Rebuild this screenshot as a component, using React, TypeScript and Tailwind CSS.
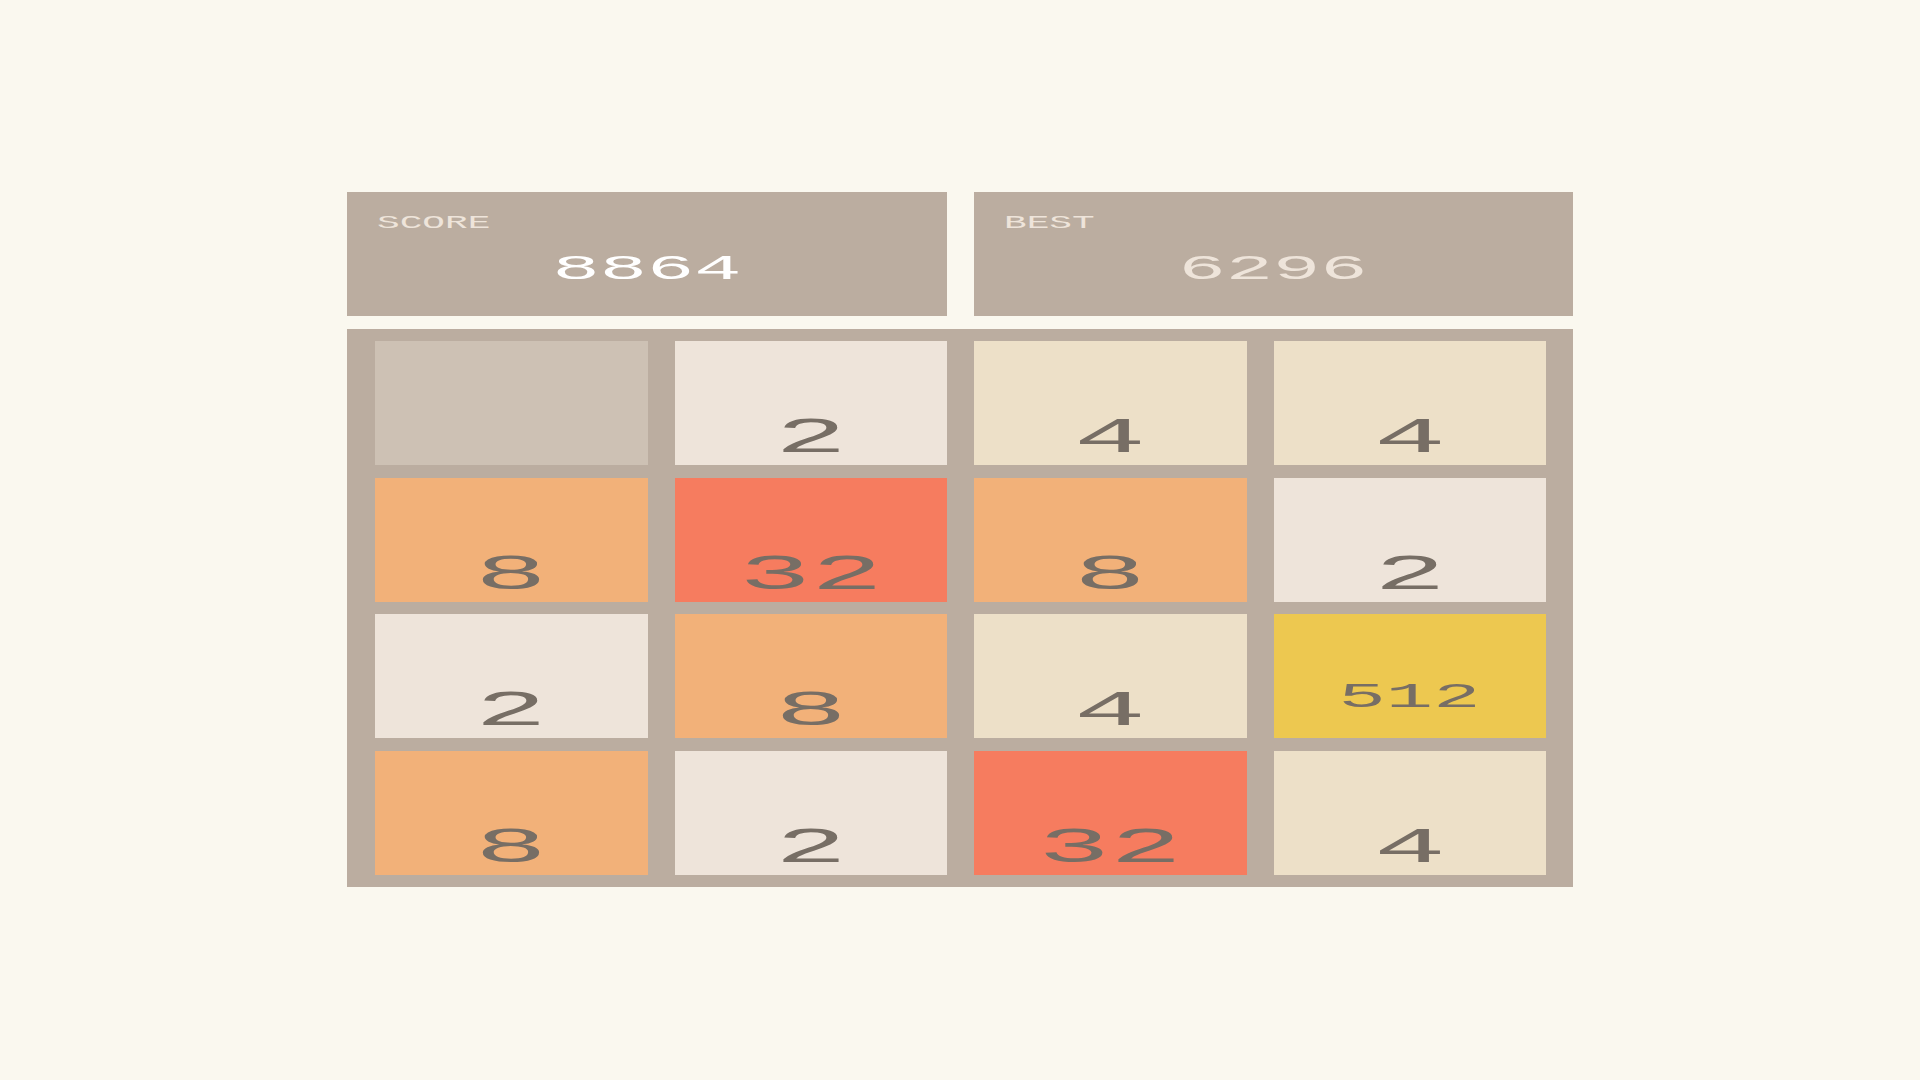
const board: number[][] = [
  [0, 2, 4, 4],
  [8, 32, 8, 2],
  [2, 8, 4, 512],
  [8, 2, 32, 4],
];

const tileBg: Record<number, string> = {
  0: 'bg-[#cdc1b4]',
  2: 'bg-[#eee4da]',
  4: 'bg-[#ede0c8]',
  8: 'bg-[#f2b179]',
  32: 'bg-[#f67c5f]',
  512: 'bg-[#edc850]',
};

const ScoreBox = ({ label, value, valueColor }: { label: string; value: number; valueColor: string }) => {
  return (
    <div className="h-[124px] bg-[#bbada0] pl-[30px] pr-[30px] pt-[20px] overflow-hidden">
      <div className="h-[22px] text-[18px] leading-[22px] text-[#eee4da]">
        <span className="inline-block origin-left scale-x-[2.1]">{label}</span>
      </div>
      <div className={`mt-[16px] text-center text-[35px] leading-[40px] ${valueColor}`}>
        <span className="inline-block scale-x-[2.25]">{value}</span>
      </div>
    </div>
  );
};

const Tile = ({ value }: { value: number }) => {
  if (value === 0) return <div className={`h-[124px] ${tileBg[0]}`} />;

  if (value >= 100) {
    return (
      <div className={`h-[124px] flex items-end justify-center pb-[20px] text-[35px] leading-[40px] text-[#776e65] ${tileBg[value]}`}>
        <span className="inline-block scale-x-[2.25]">{value}</span>
      </div>
    );
  }

  return (
    <div className={`h-[124px] flex items-end justify-center pb-[1px] text-[50px] leading-[50px] text-[#776e65] ${tileBg[value]}`}>
      <span className="inline-block scale-x-[2.4]">{value}</span>
    </div>
  );
};

export default function App() {
  return (
    <div className="min-h-screen bg-[#faf8ef] pt-[192px] font-['Liberation_Mono',monospace]">
      <div className="mx-auto flex w-[1226px] flex-col gap-[13px]">
        <div className="grid grid-cols-2 gap-[27px]">
          <ScoreBox label="SCORE" value={8864} valueColor="text-white" />
          <ScoreBox label="BEST" value={6296} valueColor="text-[#eee4da]" />
        </div>
        <div className="grid grid-cols-4 gap-x-[27px] gap-y-[12.67px] bg-[#bbada0] pl-[28px] pr-[27px] py-[12px]">
          {board.flat().map((value, i) => (
            <Tile key={i} value={value} />
          ))}
        </div>
      </div>
    </div>
  );
}
